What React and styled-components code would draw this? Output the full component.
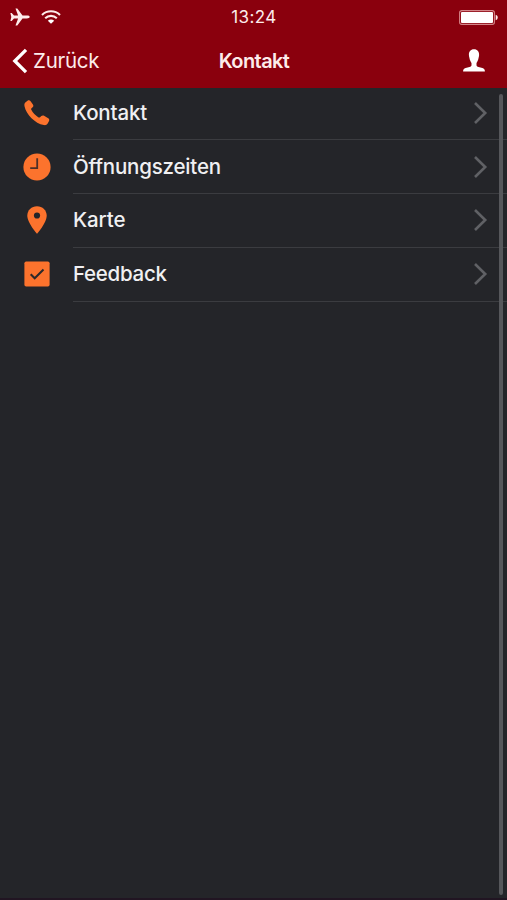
import React from 'react';
import styled, { createGlobalStyle } from 'styled-components';

const GlobalStyle = createGlobalStyle`
  * { box-sizing: border-box; }
  body {
    margin: 0;
    background: #242529;
    font-family: Inter, 'Liberation Sans', sans-serif;
  }
`;

const Screen = styled.div`
  position: relative;
  display: flex;
  flex-direction: column;
  height: 900px;
  overflow: hidden;
  background: #242529;
  border-bottom: 2px solid #211522;
`;

const Header = styled.header`
  flex: none;
  height: 88px;
  background: #8a000d;
  color: #fdeceb;
`;

const Bar = styled.div`
  display: grid;
  grid-template-columns: 1fr auto 1fr;
  align-items: center;
  height: ${(p) => p.$height}px;
  padding: ${(p) => p.$padding};
`;

const Side = styled.div`
  display: flex;
  align-items: center;
  justify-content: ${(p) => (p.$end ? 'flex-end' : 'flex-start')};
  gap: ${(p) => p.$gap || 0}px;
`;

const Clock = styled.span`
  font-size: 17px;
  line-height: 20px;
  letter-spacing: 0.4px;
`;

const Title = styled.h1`
  margin: 0;
  font-size: 20px;
  line-height: 26px;
  font-weight: 600;
  letter-spacing: -0.6px;
`;

const BackButton = styled.button`
  display: flex;
  align-items: center;
  gap: 5px;
  margin-left: -11px;
  padding: 0;
  border: 0;
  background: none;
  color: inherit;
  font: 400 20.5px/26px Inter, 'Liberation Sans', sans-serif;
  letter-spacing: -0.25px;
`;

const List = styled.ul`
  display: flex;
  flex-direction: column;
  margin: -1.5px 0 0;
  padding: 0;
  list-style: none;
`;

const Row = styled.li`
  display: grid;
  grid-template-columns: 73px 1fr;
  height: 53.75px;
`;

const IconCell = styled.div`
  display: grid;
  place-items: center;
  padding: 0 0 1px 1px;
  color: #fc732d;
`;

const RowBody = styled.div`
  display: flex;
  align-items: center;
  justify-content: space-between;
  padding-right: 19px;
  border-bottom: 1px solid #3b3c40;
`;

const Label = styled.span`
  color: #f0f0f2;
  font-size: 20.5px;
  line-height: 26px;
  font-weight: 450;
  letter-spacing: ${(p) => p.$spacing}px;
`;

const ScrollThumb = styled.div`
  position: absolute;
  top: 94px;
  right: 4px;
  bottom: 3px;
  width: 4px;
  border-radius: 2px;
  background: #56575b;
`;

const Icon = styled.svg`
  display: block;
  flex: none;
  overflow: visible;
`;

const Airplane = () => (
  <Icon width="20" height="18" viewBox="0 0 20 18" fill="#fdeceb">
    <path d="M19.7 9c0 .9-1.2 1.4-2.8 1.4h-4.4L7.3 17.6H5.5l2.6-7.2H4L1.7 13H.4l.9-4-.9-4h1.3L4 7.6h4.1L5.5.4h1.8l5.2 7.2h4.4c1.6 0 2.8.5 2.8 1.4z" />
  </Icon>
);

const Wifi = () => (
  <Icon width="20" height="14" viewBox="0 0 20 14" fill="none" stroke="#fdeceb" strokeWidth="2.1">
    <path d="M1 4.9C6 .1 14 .1 19 4.9M4.2 8.2c3.3-3.1 8.3-3.1 11.6 0" />
    <path d="M10 13.8 6.8 10.7c1.8-1.7 4.6-1.7 6.4 0z" fill="#fff" stroke="none" />
  </Icon>
);

const Battery = () => (
  <Icon width="39" height="15" viewBox="0 0 39 15">
    <rect x=".6" y=".6" width="34.8" height="13.8" rx="2.2" fill="none" stroke="#d48488" strokeWidth="1.1" />
    <rect x="2" y="2" width="32" height="11" rx="1" fill="#fff" />
    <path d="M36.7 4.8c2.7.6 2.7 4.8 0 5.4z" fill="#fdeceb" />
  </Icon>
);

const Back = () => (
  <Icon width="16" height="26" viewBox="0 0 16 26" fill="none" stroke="#fff" strokeWidth="3.3">
    <path d="M14 1.8 2.8 13 14 24.2" />
  </Icon>
);

const Person = () => (
  <Icon width="22" height="23" viewBox="0 0 22 23" fill="#fff">
    <path d="M11 .3c3.5 0 5.3 2.4 5.1 5.8-.1 1.1-.2 1.8-.5 2.7-.4 2.3-1.3 4.1-2.1 5.1v2.3c0 .9.7 1.4 2 1.8l3.9 1.1c1.7.5 2.5 1.4 2.5 3.3H.1c0-1.9.8-2.8 2.5-3.3L6.5 18c1.3-.4 2-.9 2-1.8v-2.3c-.8-1-1.7-2.8-2.1-5.1-.3-.9-.4-1.6-.5-2.7C5.7 2.7 7.5.3 11 .3z" />
  </Icon>
);

const Chevron = () => (
  <Icon width="15" height="24" viewBox="0 0 15 24" fill="none" stroke="#606165" strokeWidth="2.6">
    <path d="M2 2 12.2 12 2 22" />
  </Icon>
);

const Phone = () => (
  <Icon width="26" height="26" viewBox="0 0 26 26" fill="currentColor">
    <path d="M1.3 2.5 3.5.8c1-.8 2.3-.6 3.1.4l2.3 3.2c.7 1 .6 2.1-.3 2.9L7.3 8.4c-.3.4-.3.8 0 1.3 1.5 2.9 4.1 5.7 7.3 7.7.5.3 1 .2 1.4-.2l1.3-1.2c.8-.7 1.9-.8 2.8-.2l4.1 2.5c1.1.7 1.4 1.9.7 3l-1.4 2.5c-.7 1.2-2 1.6-3.7 1.3C11 23.3 2.3 14.7.5 6.2c-.3-1.6-.1-2.8.8-3.7z" />
  </Icon>
);

const ClockIcon = () => (
  <Icon width="28" height="28" viewBox="0 0 28 28">
    <circle cx="14" cy="14" r="13.6" fill="currentColor" />
    <path d="M14.2 5.2v10H7.2" fill="none" stroke="#4d3028" strokeWidth="1.8" />
  </Icon>
);

const Pin = () => (
  <Icon width="20" height="28" viewBox="0 0 20 28">
    <path d="M10 .3c5.5 0 9.7 4.1 9.7 9.4C19.7 16.6 10 27.8 10 27.8S.3 16.6.3 9.7C.3 4.4 4.5.3 10 .3z" fill="currentColor" />
    <circle cx="10" cy="9.5" r="3.1" fill="#242529" />
  </Icon>
);

const Check = () => (
  <Icon width="26" height="26" viewBox="0 0 26 26">
    <rect x=".4" y=".4" width="25.2" height="25.2" rx="1.8" fill="currentColor" />
    <path d="m6.7 13.3 4 4 8.8-8.8" fill="none" stroke="#2b292a" strokeWidth="2" />
  </Icon>
);

const items = [
  { label: 'Kontakt', icon: Phone, spacing: -0.15 },
  { label: 'Öffnungszeiten', icon: ClockIcon, spacing: -0.2 },
  { label: 'Karte', icon: Pin, spacing: -0.1 },
  { label: 'Feedback', icon: Check, spacing: -0.27 },
];

export default function App() {
  return (
    <>
      <GlobalStyle />
      <Screen>
        <Header>
          <Bar $height={34} $padding="0 9px 0 10px">
            <Side $gap={11}>
              <Airplane />
              <Wifi />
            </Side>
            <Clock>13:24</Clock>
            <Side $end>
              <Battery />
            </Side>
          </Bar>
          <Bar $height={53} $padding="0 22px 0 23px">
            <Side>
              <BackButton>
                <Back />
                Zurück
              </BackButton>
            </Side>
            <Title>Kontakt</Title>
            <Side $end>
              <Person />
            </Side>
          </Bar>
        </Header>
        <List>
          {items.map(({ label, icon: Glyph, spacing }) => (
            <Row key={label}>
              <IconCell>
                <Glyph />
              </IconCell>
              <RowBody>
                <Label $spacing={spacing}>{label}</Label>
                <Chevron />
              </RowBody>
            </Row>
          ))}
        </List>
        <ScrollThumb />
      </Screen>
    </>
  );
}
